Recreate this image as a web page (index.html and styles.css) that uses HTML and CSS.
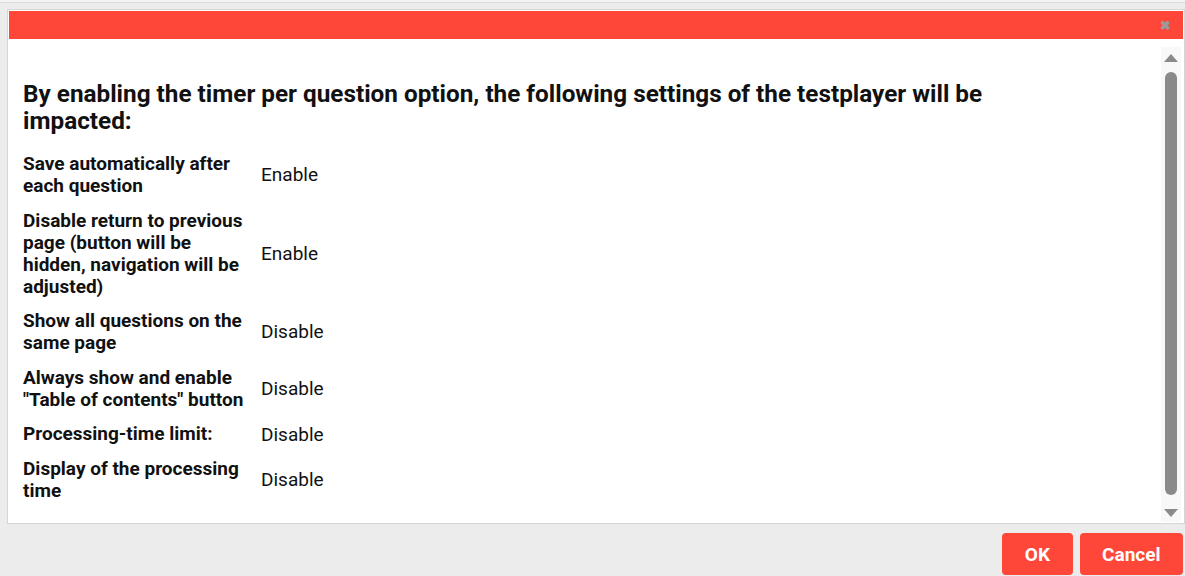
FILE: index.html
```html
<!DOCTYPE html>
<html lang="en">

<head>
    <meta charset="UTF-8">
    <title>Timer per question</title>
    <link rel="stylesheet" href="styles.css">
</head>

<body>
    <div class="topbar"></div>

    <section class="dialog">
        <header class="dialog-head">
            <span class="luk">&#x2716;</span>
        </header>
        <div class="dialog-body">
            <div class="indhold">
                <h1>By enabling the timer per question option, the following settings of the testplayer will be impacted:</h1>
                <div class="tabel">
                    <div class="navn">Save automatically after each question</div>
                    <div class="vaerdi">Enable</div>

                    <div class="navn">Disable return to previous page (button will be hidden, navigation will be adjusted)</div>
                    <div class="vaerdi">Enable</div>

                    <div class="navn">Show all questions on the same page</div>
                    <div class="vaerdi">Disable</div>

                    <div class="navn">Always show and enable "Table of contents" button</div>
                    <div class="vaerdi">Disable</div>

                    <div class="navn">Processing-time limit:</div>
                    <div class="vaerdi">Disable</div>

                    <div class="navn">Display of the processing time</div>
                    <div class="vaerdi">Disable</div>
                </div>
            </div>
            <div class="scrollbar">
                <span class="pil op"></span>
                <span class="thumb"></span>
                <span class="pil ned"></span>
            </div>
        </div>
    </section>

    <footer class="knapper">
        <button class="knap">OK</button>
        <button class="knap">Cancel</button>
    </footer>
</body>

</html>
```

FILE: styles.css
```css
* {
    margin: 0;
    box-sizing: border-box;
}

body {
    background-color: #ececec;
    font-family: Roboto, "Liberation Sans", sans-serif;
    color: #111;
}

.topbar {
    height: 3px;
    background-color: #f4f4f4;
    border-bottom: 1px solid #dcdcdc;
}

.dialog {
    margin: 6px 0 0 7px;
    background-color: white;
    border: 1px solid #d6d6d6;
    padding: 1px;
    height: 515px;
    display: flex;
    flex-direction: column;
}

.dialog-head {
    height: 28px;
    background-color: #ff4739;
    display: flex;
    justify-content: flex-end;
    align-items: center;
    padding-right: 12px;
}

.luk {
    color: #9a9a9a;
    font-size: 13px;
    font-weight: bold;
}

.dialog-body {
    flex-grow: 1;
    display: flex;
}

.indhold {
    flex-grow: 1;
    padding: 41px 0 0 14px;
}

h1 {
    font-size: 24.3px;
    line-height: 27px;
    font-weight: bold;
    max-width: 995px;
    margin-bottom: 13px;
}

.tabel {
    display: grid;
    grid-template-columns: 224px auto;
    column-gap: 14px;
    align-items: center;
}

.navn {
    font-size: 19px;
    line-height: 22px;
    font-weight: bold;
    padding: 6px 0 6.6px;
}

.vaerdi {
    font-size: 19px;
    line-height: 22px;
}

.scrollbar {
    width: 20px;
    margin-top: 8px;
    margin-right: 2px;
    background-color: #f8f8f8;
    display: flex;
    flex-direction: column;
    align-items: center;
    padding: 7px 0 5px;
}

.pil {
    width: 0;
    height: 0;
    border-left: 7px solid transparent;
    border-right: 7px solid transparent;
}

.op {
    border-bottom: 8px solid #8a8a8a;
}

.ned {
    border-top: 8px solid #8a8a8a;
}

.thumb {
    width: 12px;
    flex-grow: 1;
    margin: 10px 0 14px;
    background-color: #8a8a8a;
    border-radius: 6px;
}

.knapper {
    display: flex;
    justify-content: flex-end;
    gap: 7px;
    padding: 9px 2px 0 0;
}

.knap {
    border: none;
    border-radius: 4px;
    background-color: #ff4739;
    color: white;
    font-family: Roboto, "Liberation Sans", sans-serif;
    font-weight: bold;
    font-size: 19px;
    height: 42px;
    padding: 0 22.5px;
}
```
